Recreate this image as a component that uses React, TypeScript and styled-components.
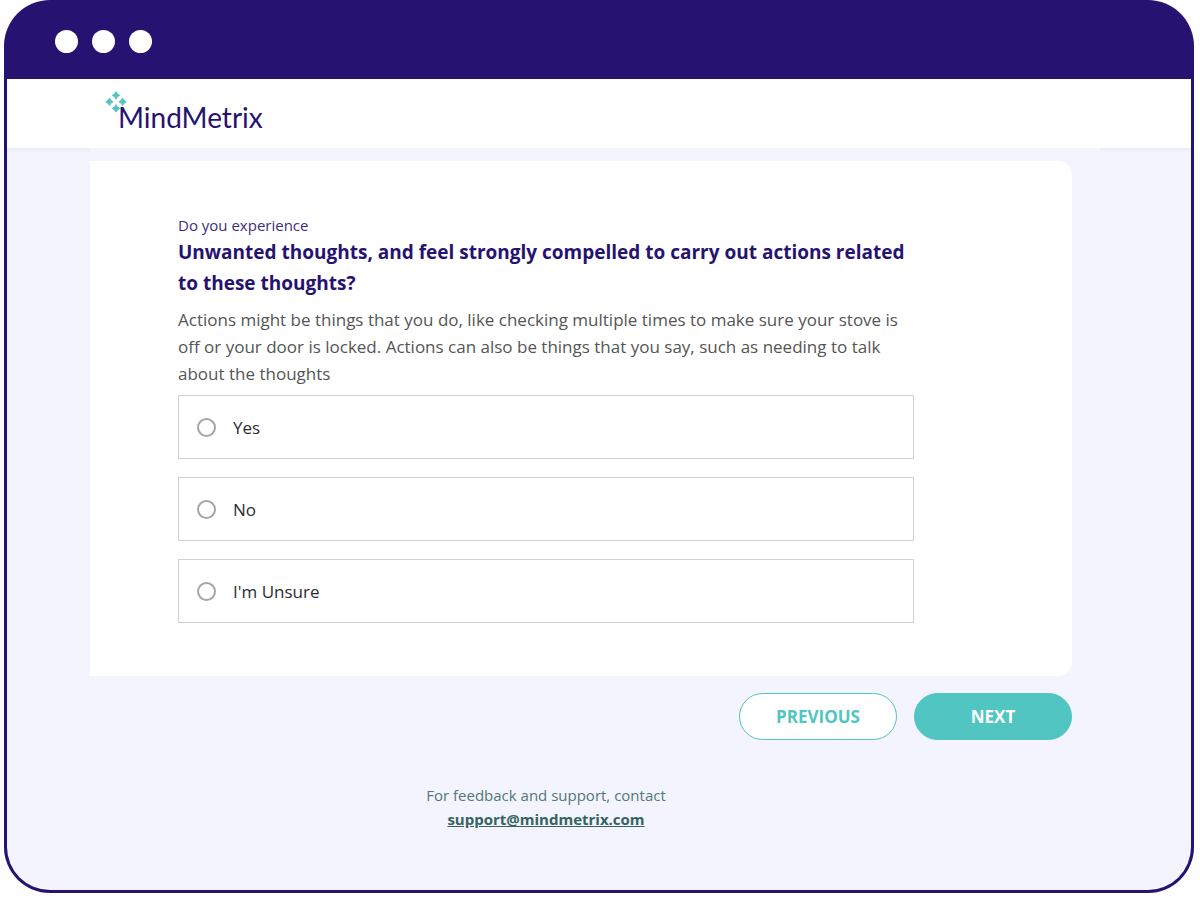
import React, { useState } from "react";
import styled, { createGlobalStyle } from "styled-components";

const navy = "#261271";
const teal = "#50c5c2";
const mist = "#f3f4fd";

const GlobalStyle = createGlobalStyle`
  *, *::before, *::after { box-sizing: border-box; }
  body {
    margin: 0;
    background: #fefefe;
    font-family: "Open Sans", "Noto Sans", sans-serif;
    font-size: 17px;
  }
`;

const BrowserFrame = styled.div`
  margin: 0 6px 11px 4px;
  padding: 0 3px 3px;
  border-radius: 46px;
  background: ${navy};
`;

const TitleBar = styled.div`
  display: flex;
  align-items: center;
  gap: 14px;
  height: 79px;
  padding: 4px 48px 0;
`;

const WindowDot = styled.span`
  width: 23px;
  height: 23px;
  border-radius: 50%;
  background: #fff;
`;

const Viewport = styled.div`
  overflow: hidden;
  border-radius: 0 0 43px 43px;
  background: ${mist};
`;

const SiteHeader = styled.header`
  height: 69px;
  padding: 12px 98px;
  background: #fff;
  box-shadow: 0 2px 4px rgba(60, 60, 60, 0.06);
`;

const Logo = styled.a`
  display: inline-flex;
  align-items: flex-start;
  color: ${navy};
  text-decoration: none;
`;

const LogoMark = styled.svg`
  width: 22px;
  height: 22px;
  margin-right: -9px;
`;

const LogoName = styled.span`
  padding-top: 10px;
  font-family: Lato, sans-serif;
  font-size: 28px;
  line-height: 32px;
`;

const Page = styled.main`
  position: relative;
  margin: 0 91px 0 83px;
  padding: 13px 28px 59px 0;
  background: ${mist};
`;

const Card = styled.section`
  padding: 52px 158px 53px 88px;
  border-radius: 0 14px 14px 0;
  background: #fff;
`;

const Lead = styled.p`
  margin: 0;
  color: #3d2c80;
  font-size: 15px;
  line-height: 24px;
`;

const Question = styled.h1`
  margin: 0 0 7px;
  color: ${navy};
  font-size: 19px;
  font-weight: 700;
  line-height: 31px;
`;

const Hint = styled.p`
  margin: 0 0 8px;
  color: #555;
  line-height: 27px;
`;

const Options = styled.fieldset`
  display: grid;
  gap: 18px;
  margin: 0;
  padding: 0;
  border: 0;
`;

const Option = styled.label`
  display: flex;
  align-items: center;
  gap: 17px;
  height: 64px;
  padding: 0 18px;
  border: 1px solid #ced3d3;
  color: #2b2d31;
  cursor: pointer;
`;

const Radio = styled.input`
  appearance: none;
  width: 19px;
  height: 19px;
  margin: 0;
  border: 2px solid #a3a5ae;
  border-radius: 50%;
  background: #fff;

  &:checked {
    border: 6px solid ${teal};
  }
`;

const Actions = styled.div`
  display: flex;
  justify-content: flex-end;
  gap: 17px;
  margin-top: 17px;
`;

const Button = styled.button<{ $primary?: boolean }>`
  width: 158px;
  height: 47px;
  border: 1px solid ${teal};
  border-radius: 24px;
  background: ${(p) => (p.$primary ? teal : "#fff")};
  color: ${(p) => (p.$primary ? "#fff" : teal)};
  font-family: inherit;
  font-size: 17px;
  font-weight: 700;
  cursor: pointer;
`;

const Footer = styled.footer`
  margin-top: 43px;
  padding-right: 70px;
  color: #53777a;
  font-size: 15px;
  line-height: 24px;
  text-align: center;
`;

const SupportLink = styled.a`
  color: #35635f;
  font-weight: 700;
`;

const answers = ["Yes", "No", "I'm Unsure"];

const sparkle = "l1.5 2.3 2.3 1.5-2.3 1.5-1.5 2.3-1.5-2.3-2.3-1.5 2.3-1.5z";

export default function App() {
  const [answer, setAnswer] = useState<string | null>(null);

  return (
    <>
      <GlobalStyle />
      <BrowserFrame>
        <TitleBar>
          <WindowDot />
          <WindowDot />
          <WindowDot />
        </TitleBar>
        <Viewport>
          <SiteHeader>
            <Logo href="#">
              <LogoMark viewBox="0 0 22 22" aria-hidden="true" fill={teal} stroke={teal} strokeWidth=".8" strokeLinejoin="round">
                <path d={`M11 .5${sparkle}`} />
                <path d={`M4.4 7${sparkle}`} />
                <path d={`M17.6 7${sparkle}`} />
                <path d={`M11 13.6${sparkle}`} />
              </LogoMark>
              <LogoName>MindMetrix</LogoName>
            </Logo>
          </SiteHeader>
          <Page>
            <Card>
              <Lead>Do you experience</Lead>
              <Question id="question">
                Unwanted thoughts, and feel strongly compelled to carry out actions related to these thoughts?
              </Question>
              <Hint>
                Actions might be things that you do, like checking multiple times to make sure your stove is off or your
                door is locked. Actions can also be things that you say, such as needing to talk about the thoughts
              </Hint>
              <Options aria-labelledby="question">
                {answers.map((text) => (
                  <Option key={text}>
                    <Radio type="radio" name="answer" checked={answer === text} onChange={() => setAnswer(text)} />
                    {text}
                  </Option>
                ))}
              </Options>
            </Card>
            <Actions>
              <Button type="button">PREVIOUS</Button>
              <Button type="button" $primary>NEXT</Button>
            </Actions>
            <Footer>
              <div>For feedback and support, contact</div>
              <SupportLink href="mailto:support@mindmetrix.com">support@mindmetrix.com</SupportLink>
            </Footer>
          </Page>
        </Viewport>
      </BrowserFrame>
    </>
  );
}
